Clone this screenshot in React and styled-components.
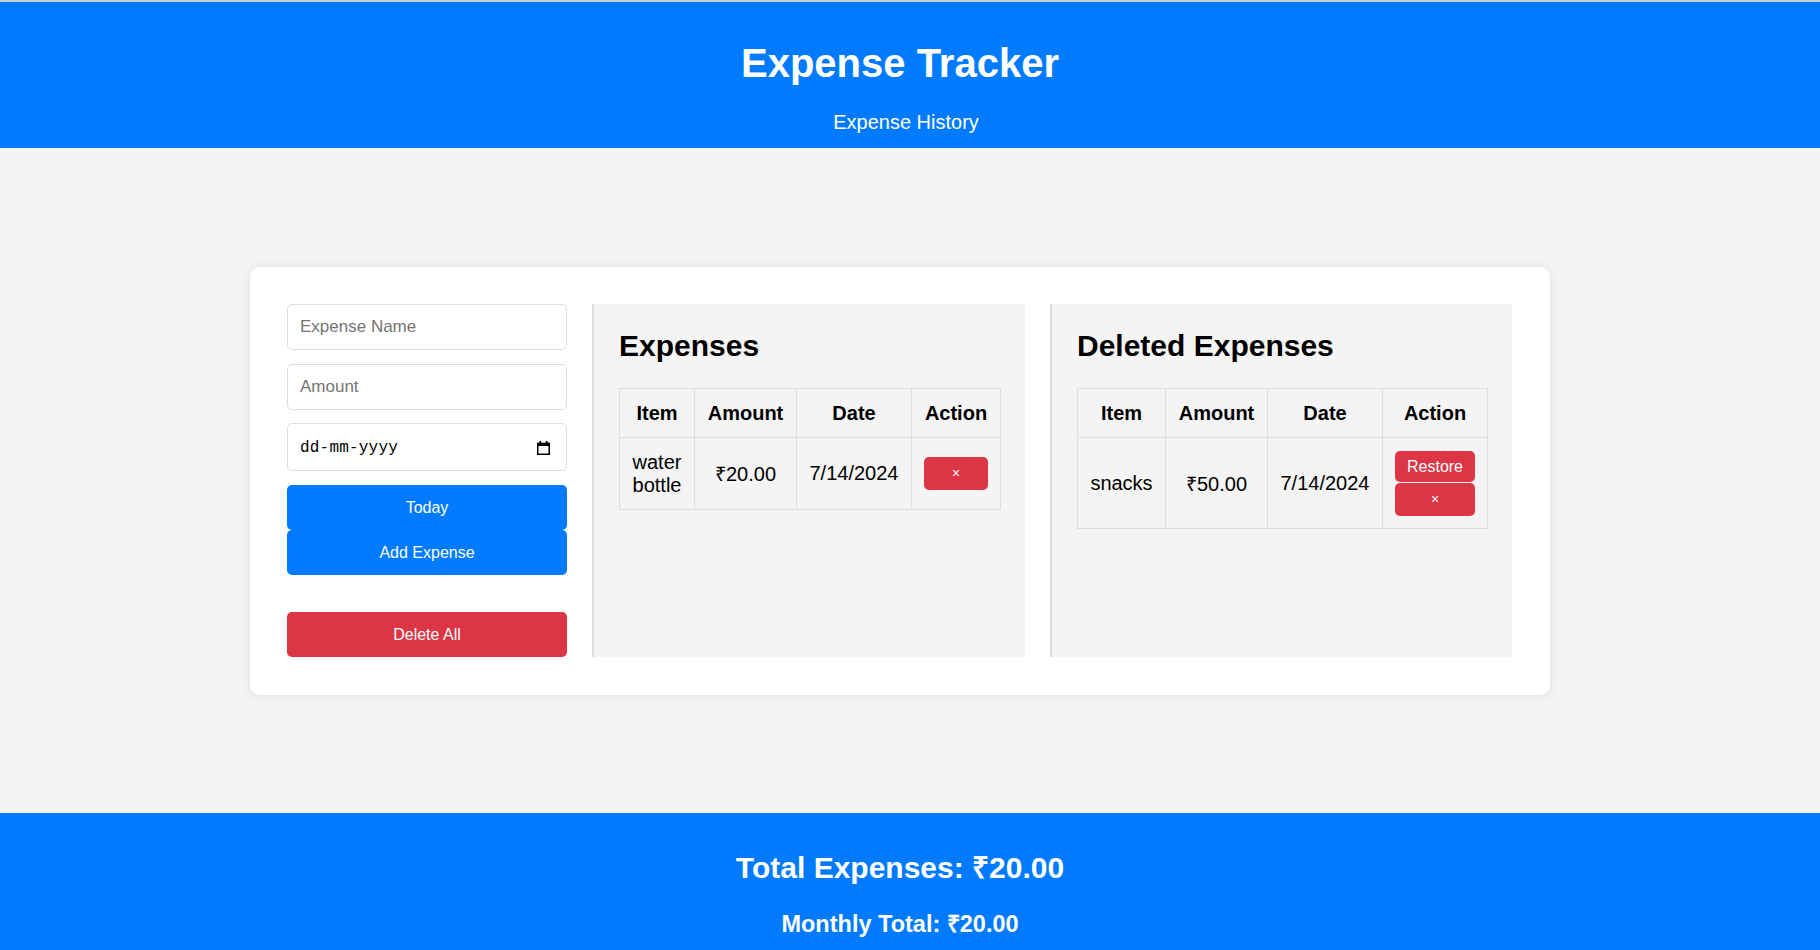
import React from "react";
import styled, { createGlobalStyle } from "styled-components";

const GlobalStyle = createGlobalStyle`
 body {
     margin: 0;
     background: #f4f4f4;
     font-family: "Liberation Sans", Arial, sans-serif;
     color: #000;
}
 * {
     box-sizing: border-box;
}`;

const Header = styled.header` background: #007bff;
 border-top: 2px solid #cccccc;
 color: #fff;
 text-align: center;
 padding: 39px 20px 14px 0;`;

const Title = styled.h1` margin: 0;
 font-size: 40px;
 font-weight: bold;
 line-height: normal;`;

const HistoryLink = styled.a` display: block;
 margin: 25px 0 0 12px;
 font-size: 20px;
 color: #fff;
 text-decoration: none;
 cursor: pointer;`;

const Main = styled.main` padding: 119px 20px 118px 0;`;

const Card = styled.div` width: 1300px;
 margin: 0 auto;
 background: #ffffff;
 border-radius: 10px;
 box-shadow: 0 0 10px rgba(0, 0, 0, 0.1);
 padding: 37px 38px 38px 37px;
 display: flex;
 gap: 25px;`;

const FormColumn = styled.div` flex: 1;
 display: flex;
 flex-direction: column;`;

const Field = styled.input` display: block;
 width: 100%;
 height: 46px;
 padding: 0 12px;
 margin-bottom: ${(p) => p.$space}px;
 border: 1px solid #ddd;
 border-radius: 5px;
 font-family: "Liberation Sans", Arial, sans-serif;
 font-size: 17px;
 background: #fff;
 outline: none;
 &::placeholder {
     color: #757575;
}`;

const DateBox = styled.div` display: flex;
 align-items: center;
 justify-content: space-between;
 height: 48px;
 padding: 2px 16px 0 12px;
 margin-bottom: 14px;
 border: 1px solid #ddd;
 border-radius: 5px;
 background: #fff;
 cursor: text;`;

const DateText = styled.span` font-family: "Liberation Mono", "DejaVu Sans Mono", monospace;
 font-size: 16px;
 letter-spacing: 0.2px;
 color: #000;`;

const FormButton = styled.button` display: block;
 width: 100%;
 padding: 13px;
 margin-top: ${(p) => p.$top || 0}px;
 border: none;
 border-radius: 5px;
 background: ${(p) => (p.$danger ? "#dc3545" : "#007bff")};
 color: #fff;
 font-family: "Liberation Sans", Arial, sans-serif;
 font-size: 16px;
 line-height: 19px;
 cursor: pointer;`;

const Section = styled.div` width: ${(p) => p.$width}px;
 flex: none;
 background: #f4f4f4;
 border-left: 2px solid #ddd;
 padding: 25px;`;

const SectionTitle = styled.h2` margin: 0 0 25px;
 font-size: 30px;
 font-weight: bold;
 line-height: normal;`;

const Table = styled.table` width: 100%;
 table-layout: fixed;
 border-collapse: collapse;
 font-size: 20px;
 th,
 td {
     border: 1px solid #ddd;
     padding: 12.5px 12px;
     text-align: center;
     vertical-align: middle;
}
 th {
     font-weight: bold;
}`;

const Col = styled.col` width: ${(p) => p.$w}px;`;

const RowButton = styled.button` display: block;
 width: 100%;
 border: none;
 border-radius: 5px;
 background: #dc3545;
 color: #fff;
 font-family: "Liberation Sans", Arial, sans-serif;
 font-size: ${(p) => (p.$restore ? 16 : 14)}px;
 line-height: ${(p) => (p.$restore ? 19 : 17)}px;
 padding: ${(p) => (p.$restore ? "6px 0" : "8px 0")};
 margin-bottom: ${(p) => (p.$restore ? 1 : 0)}px;
 cursor: pointer;`;

const Footer = styled.footer` background: #007bff;
 color: #fff;
 text-align: center;
 padding: 33px 20px 30px 0;`;

const TotalText = styled.h2` margin: 0;
 font-size: 30px;
 font-weight: bold;
 line-height: normal;`;

const MonthlyText = styled.h3` margin: 20px 0 0;
 font-size: 23.5px;
 font-weight: bold;
 line-height: normal;`;

const CalendarIcon = () => (
  <svg width="13" height="14" viewBox="0 0 13 14">
    <rect x="2.5" y="0" width="1.6" height="2.5" fill="#000" />
    <rect x="8.9" y="0" width="1.6" height="2.5" fill="#000" />
    <rect x="0" y="1.8" width="13" height="3.2" fill="#000" />
    <rect x="0.75" y="2.5" width="11.5" height="10.75" fill="none" stroke="#000" strokeWidth="1.5" />
  </svg>
);

const rupee = (n) => `\u20b9${n.toFixed(2)}`;

/**
 * One table of expenses. cols holds the column widths, actions draws the buttons of a row.
 */
const ExpenseTable = ({ rows, cols, actions }) => (
  <Table>
    <colgroup>
      {cols.map((w, i) => (
        <Col key={i} $w={w} />
      ))}
    </colgroup>
    <thead>
      <tr>
        <th>Item</th>
        <th>Amount</th>
        <th>Date</th>
        <th>Action</th>
      </tr>
    </thead>
    <tbody>
      {rows.map((e) => (
        <tr key={e.id}>
          <td>{e.name}</td>
          <td>{rupee(e.amount)}</td>
          <td>{e.date}</td>
          <td>{actions(e)}</td>
        </tr>
      ))}
    </tbody>
  </Table>
);

/**
 * Expense tracker page: form on the left, live and deleted expenses beside it.
 */
export default function App() {
  const expenses = [{ id: 1, name: "water bottle", amount: 20, date: "7/14/2024" }];
  const deleted = [{ id: 2, name: "snacks", amount: 50, date: "7/14/2024" }];

  const total = expenses.reduce((sum, e) => sum + e.amount, 0);

  return (
    <>
      <GlobalStyle />
      <Header>
        <Title>Expense Tracker</Title>
        <HistoryLink>Expense History</HistoryLink>
      </Header>

      <Main>
        <Card>
          <FormColumn>
            <Field type="text" placeholder="Expense Name" $space={14} />
            <Field type="text" placeholder="Amount" $space={13} />
            <DateBox>
              <DateText>dd-mm-yyyy</DateText>
              <CalendarIcon />
            </DateBox>
            <FormButton>Today</FormButton>
            <FormButton>Add Expense</FormButton>
            <FormButton $danger $top={37}>
              Delete All
            </FormButton>
          </FormColumn>

          <Section $width={433}>
            <SectionTitle>Expenses</SectionTitle>
            <ExpenseTable
              rows={expenses}
              cols={[75, 102, 115, 89]}
              actions={() => <RowButton>×</RowButton>}
            />
          </Section>

          <Section $width={462}>
            <SectionTitle>Deleted Expenses</SectionTitle>
            <ExpenseTable
              rows={deleted}
              cols={[88, 102, 115, 105]}
              actions={() => (
                <>
                  <RowButton $restore>Restore</RowButton>
                  <RowButton>×</RowButton>
                </>
              )}
            />
          </Section>
        </Card>
      </Main>

      <Footer>
        <TotalText>Total Expenses: {rupee(total)}</TotalText>
        <MonthlyText>Monthly Total: {rupee(total)}</MonthlyText>
      </Footer>
    </>
  );
}
